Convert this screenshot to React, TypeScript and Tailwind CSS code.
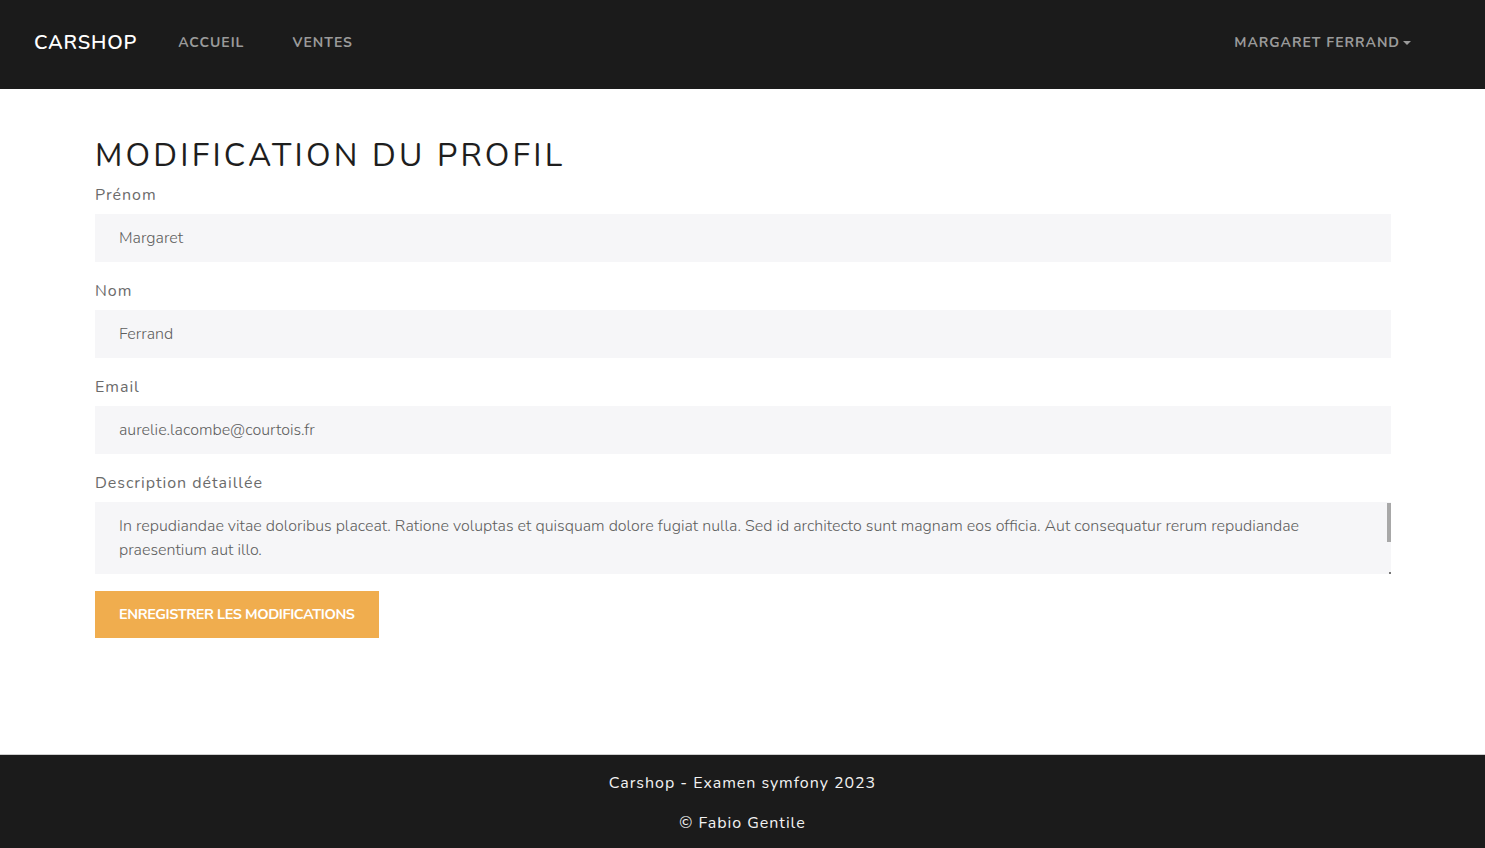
import React from "react";

const font = { fontFamily: "Nunito, Lato, 'Open Sans', sans-serif" };

const Field: React.FC<{ label: string; value: string }> = ({ label, value }) => (
  <div className="mb-4">
    <label className="block h-6 leading-[26px] mb-2 text-[16px] tracking-[0.06em] text-[#6b6b6b]">{label}</label>
    <div className="h-12 bg-[#f6f6f8] px-6 flex items-center text-[16px] font-light text-[#5e5e5e]">{value}</div>
  </div>
);

const App: React.FC = () => {
  return (
    <div className="min-h-screen flex flex-col bg-white" style={font}>
      {/* Navbar */}
      <nav className="h-[89px] bg-[#1b1b1b] flex items-center pl-[34px] pr-[74px] pb-[4px]">
        <span className="text-white text-[20px] font-semibold tracking-[0.04em] mr-[41px]">CARSHOP</span>
        <a className="text-[#9a9a9a] text-[14px] font-bold tracking-[0.07em] mr-12">ACCUEIL</a>
        <a className="text-[#9a9a9a] text-[14px] font-bold tracking-[0.07em]">VENTES</a>
        <div className="ml-auto flex items-center text-[#9a9a9a] text-[14px] font-bold tracking-[0.07em]">
          MARGARET FERRAND
          <span className="ml-[3px] inline-block w-0 h-0 border-l-[4px] border-r-[4px] border-t-[4px] border-l-transparent border-r-transparent border-t-[#9a9a9a]" />
        </div>
      </nav>

      {/* Main */}
      <main className="flex-1 pl-[95px] pr-[94px] pt-[44px] pb-[116px]">
        <h1 className="text-[32px] leading-[45px] tracking-[0.1em] text-[#1e1e1e] font-normal mb-[4px]">MODIFICATION DU PROFIL</h1>
        <Field label="Prénom" value="Margaret" />
        <Field label="Nom" value="Ferrand" />
        <Field label="Email" value="aurelie.lacombe@courtois.fr" />
        <div className="mb-[17px]">
          <label className="block h-6 leading-[26px] mb-2 text-[16px] tracking-[0.06em] text-[#6b6b6b]">Description détaillée</label>
          <div className="relative h-[72px] bg-[#f6f6f8] px-6 pt-[12px] text-[16px] font-light leading-6 text-[#5e5e5e]">
            In repudiandae vitae doloribus placeat. Ratione voluptas et quisquam dolore fugiat nulla. Sed id architecto sunt magnam eos officia. Aut consequatur rerum repudiandae praesentium aut illo.
            <span className="absolute right-0 top-[1px] w-[4px] h-[39px] bg-[#a8a8a8]" />
            <span className="absolute right-0 bottom-0 w-[2px] h-[2px] bg-[#777]" />
          </div>
        </div>
        <button className="h-[47px] px-6 bg-[#f0ad4e] text-white text-[14.5px] font-bold tracking-[-0.03em]">
          ENREGISTRER LES MODIFICATIONS
        </button>
      </main>

      {/* Footer */}
      <footer className="h-[94px] bg-[#1b1b1b] border-t border-[#cfcfcf] flex flex-col items-center pt-[16px] text-[#f2f2f2] text-[16px] tracking-[0.06em] leading-6">
        <p>Carshop - Examen symfony 2023</p>
        <p className="mt-4">© Fabio Gentile</p>
      </footer>
    </div>
  );
};

export default App;
